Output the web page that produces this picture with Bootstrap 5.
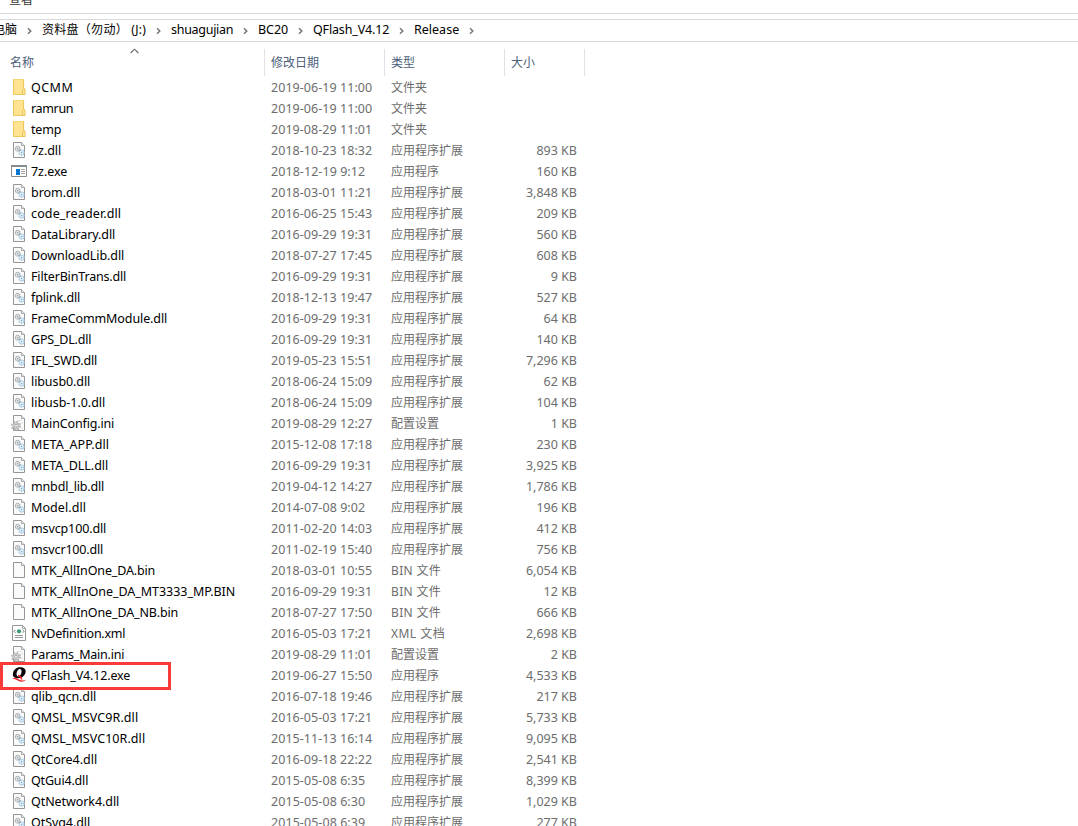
<!DOCTYPE html>
<html lang="zh-CN">
<head>
<meta charset="utf-8">
<title>Release</title>
<link rel="stylesheet" href="https://cdn.jsdelivr.net/npm/bootstrap@5.3.0/dist/css/bootstrap.min.css">
<style>
body{font:12px/21px "Noto Sans","Noto Sans CJK SC",sans-serif;color:#000;background:#fff;height:826px}
.menu-strip{height:14px;border-bottom:1px solid #dadada;padding-left:9px}
.menu-strip span{margin-top:-11px;color:#333}
.address{height:23px;margin-top:5px;border-top:1px solid #d9d9d9;border-bottom:1px solid #d9d9d9}
.crumb{line-height:20px}
.crumb.first{width:17px;direction:rtl}
.sep{width:25px}
.head{height:35px;padding-top:7px;color:#4c607a}
.head .cell{border-right:1px solid #e2e2e2;padding:3px 0 0 6px;height:27px;line-height:21px}
.c-name{width:265px}.c-date,.c-type{width:120px}.c-size{width:80px}
.head .c-name{padding-left:10px}
.sort{left:130px;top:-1px}
.entry{height:21px;color:#6d6d6d}
.entry .c-name{padding-left:11px;color:#000}
.entry .c-date,.entry .c-type{padding-left:6px}
.entry .c-size{width:72px}
.entry svg{width:16px;height:16px;margin:2px 4px 3px 0}
.latin{font-size:12.5px}
.chosen{left:0;top:662px;width:171px;height:28px;border:3px solid #fb3a3a}
</style>
</head>
<body class="overflow-hidden position-relative">
<svg class="d-none">
  <symbol id="folder" viewBox="0 0 16 16"><path d="M2 0h11v9h1v7H2z" fill="#ffe391"/><path d="M2 0h1v16H2zM2 15h12v1H2zM2 0h11v.6H2z" fill="#f0cb5c"/><path d="M12.6.5v9.2l-1 1v4.8h2.5v-5.2l-1.2-.8" fill="#ffe9a8" stroke="#e9c04b" stroke-width=".9"/></symbol>
  <symbol id="page" viewBox="0 0 16 16"><path d="M2.5.5h8l3 3v12h-11z" fill="#fafafa" stroke="#969696"/><path d="M10.5.5v3h3" fill="#eee" stroke="#969696" stroke-width=".8"/></symbol>
  <symbol id="dll" viewBox="0 0 16 16"><use href="#page"/><circle cx="6.7" cy="6.7" r="2.3" fill="#e8ebed" stroke="#a0a5a9" stroke-width="1.1" stroke-dasharray="1.2 .4"/><circle cx="6.7" cy="6.7" r=".8" fill="#8f959a"/><path d="m7.6 8.7 2-1" stroke="#888f95" stroke-width=".9"/><circle cx="10.6" cy="10.6" r="2.5" fill="#e5f3fc" stroke="#9fc3dc" stroke-width="1.2" stroke-dasharray="1.2 .4"/><circle cx="10.6" cy="10.6" r=".8" fill="#86adc8"/></symbol>
  <symbol id="ini" viewBox="0 0 16 16"><use href="#page"/><path d="M6 5.5h5M9 8h3M10 13h2" stroke="#e2e2e2"/><circle cx="5" cy="10.8" r="4.3" fill="none" stroke="#a8a8a8" stroke-width="1.3" stroke-dasharray="1.7 1.68"/><circle cx="5" cy="10.8" r="3.2" fill="#dedede" stroke="#a8a8a8" stroke-width=".9"/><circle cx="5" cy="10.8" r="1.4" fill="#fff" stroke="#959595" stroke-width=".8"/></symbol>
  <symbol id="xml" viewBox="0 0 16 16"><path d="M1.5.5h10l3 3v12h-13z" fill="#fff" stroke="#969696"/><path d="M11.5.5v3h3" fill="none" stroke="#969696" stroke-width=".8"/><path d="M4.5 4.8 3 6.3l1.5 1.5M11.5 4.8 13 6.3l-1.5 1.5" fill="none" stroke="#777"/><circle cx="8" cy="6.3" r="2.1" fill="#3b9a66"/><path d="M7 5.2h1.5v1H7z" fill="#4b91cf"/><path d="M4 10.5h8M4 12.5h8" stroke="#999"/></symbol>
  <symbol id="app" viewBox="0 0 16 16"><path d="M.5 2.5h15v11H.5z" fill="#fff" stroke="#878c91"/><path d="M0 2h16v2H0z" fill="#878c91"/><path d="M5 6h4v6H5z" fill="#0877d1"/><path d="M10 6.5h4M10 8.5h4M10 10.5h4" stroke="#9b9b9b" stroke-width=".9"/></symbol>
  <symbol id="qflash" viewBox="0 0 16 16"><path fill-rule="evenodd" d="M9 .3c4 0 6.2 2 5.6 5-.6 3.400-3.600 5.900-7.600 5.900S1.200 9.200 2 6 5.300.3 9 .3zM8.800 2c-1.900 0-3.200 2.700-3.200 5 0 1.700.5 2.500 1.600 2.500 2.100 0 3.300-2.700 3.300-5.200C10.500 2.800 10 2 8.800 2z" fill="#050505"/><path d="M1 11.700c2.800-1.400 4.600-.7 6.500.5 2.300 1.300 4.600 1.600 7.500.6-2 2.300-5.200 2.300-7.700 1-2.300-1.300-3.900-2-6.300-2.100z" fill="#ee1e24"/><path d="M7 8.500c2 .2 3 1.500 3.800 4" fill="none" stroke="#ee1e24" stroke-width="1.400"/></symbol>
  <symbol id="chevron" viewBox="0 0 6 8"><path d="m1 1.300 2.800 2.700L1 6.700" fill="none" stroke="#777" stroke-width="1.500"/></symbol>
</svg>

<header>
  <div class="menu-strip d-flex overflow-hidden"><span>查看</span></div>
  <nav class="address d-flex" id="address"></nav>
</header>
<main>
  <div class="head d-flex">
    <div class="cell c-name position-relative">名称<svg class="sort position-absolute" width="9" height="6"><path d="M.7 5 4.5 1.2 8.3 5" fill="none" stroke="#666" stroke-width="1.1"/></svg></div>
    <div class="cell c-date">修改日期</div><div class="cell c-type">类型</div><div class="cell c-size">大小</div>
  </div>
  <div id="files"></div>
</main>
<div class="chosen position-absolute"></div>

<script src="https://cdn.jsdelivr.net/npm/bootstrap@5.3.0/dist/js/bootstrap.bundle.min.js"></script>
<script>
const kinds={folder:'文件夹',dll:'应用程序扩展',app:'应用程序',qflash:'应用程序',ini:'配置设置',page:'BIN 文件',xml:'XML 文档'};
const kindWidths={page:50,xml:54};
// icon | name | name width | modified | size
const files=`folder|QCMM|42|2019-06-19 11:00|
folder|ramrun|42|2019-06-19 11:00|
folder|temp|30|2019-08-29 11:01|
dll|7z.dll|30|2018-10-23 18:32|893
app|7z.exe|36|2018-12-19 9:12|160
dll|brom.dll|49|2018-03-01 11:21|3,848
dll|code_reader.dll|90|2016-06-25 15:43|209
dll|DataLibrary.dll|84|2016-09-29 19:31|560
dll|DownloadLib.dll|93|2018-07-27 17:45|608
dll|FilterBinTrans.dll|95|2016-09-29 19:31|9
dll|fplink.dll|49|2018-12-13 19:47|527
dll|FrameCommModule.dll|136|2016-09-29 19:31|64
dll|GPS_DL.dll|60|2016-09-29 19:31|140
dll|IFL_SWD.dll|66|2019-05-23 15:51|7,296
dll|libusb0.dll|59|2018-06-24 15:09|62
dll|libusb-1.0.dll|74|2018-06-24 15:09|104
ini|MainConfig.ini|83|2019-08-29 12:27|1
dll|META_APP.dll|78|2015-12-08 17:18|230
dll|META_DLL.dll|77|2016-09-29 19:31|3,925
dll|mnbdl_lib.dll|73|2019-04-12 14:27|1,786
dll|Model.dll|55|2014-07-08 9:02|196
dll|msvcp100.dll|75|2011-02-20 14:03|412
dll|msvcr100.dll|72|2011-02-19 15:40|756
page|MTK_AllInOne_DA.bin|124|2018-03-01 10:55|6,054
page|MTK_AllInOne_DA_MT3333_MP.BIN|204|2016-09-29 19:31|12
page|MTK_AllInOne_DA_NB.bin|147|2018-07-27 17:50|666
xml|NvDefinition.xml|94|2016-05-03 17:21|2,698
ini|Params_Main.ini|93|2019-08-29 11:01|2
qflash|QFlash_V4.12.exe|99|2019-06-27 15:50|4,533
dll|qlib_qcn.dll|65|2016-07-18 19:46|217
dll|QMSL_MSVC9R.dll|107|2016-05-03 17:21|5,733
dll|QMSL_MSVC10R.dll|114|2015-11-13 16:14|9,095
dll|QtCore4.dll|66|2016-09-18 22:22|2,541
dll|QtGui4.dll|57|2015-05-08 6:35|8,399
dll|QtNetwork4.dll|88|2015-05-08 6:30|1,029
dll|QtSvg4.dll|59|2015-05-08 6:39|277`.split('\n').map(l=>l.split('|'));
document.getElementById('files').innerHTML=files.map(([icon,name,w,date,size])=>`
<div class="entry d-flex">
  <div class="c-name d-flex align-items-center flex-shrink-0"><svg><use href="#${icon}"/></svg><span class="latin fit text-nowrap" data-w="${w}">${name}</span></div>
  <div class="c-date"><span class="latin fit text-nowrap" data-w="${date.length>15?101:94}">${date}</span></div>
  <div class="c-type text-nowrap">${kindWidths[icon]?`<span class="fit" data-w="${kindWidths[icon]}">${kinds[icon]}</span>`:kinds[icon]}</div>
  <div class="c-size latin text-end">${size?size+' KB':''}</div>
</div>`).join('');
const crumbs=[['资料盘（勿动） (J:)',104],['shuagujian',62],['BC20',30],['QFlash_V4.12',76],['Release',45]];
const sep='<span class="sep d-flex align-items-center justify-content-center"><svg width="6" height="8"><use href="#chevron"/></svg></span>';
document.getElementById('address').innerHTML='<span class="crumb first overflow-hidden text-nowrap">此电脑</span>'+sep+
  crumbs.map(([t,w],i)=>`<span class="crumb text-nowrap ${i?'latin':''}" style="width:${w}px"><span class="fit" data-w="${w}">${t}</span></span>`+sep).join('');
document.querySelectorAll('.fit').forEach(e=>{
  const n=e.textContent.length, d=(+e.dataset.w+.2-e.getBoundingClientRect().width)/n;
  e.style.letterSpacing=d.toFixed(3)+'px';
});
</script>
</body>
</html>
